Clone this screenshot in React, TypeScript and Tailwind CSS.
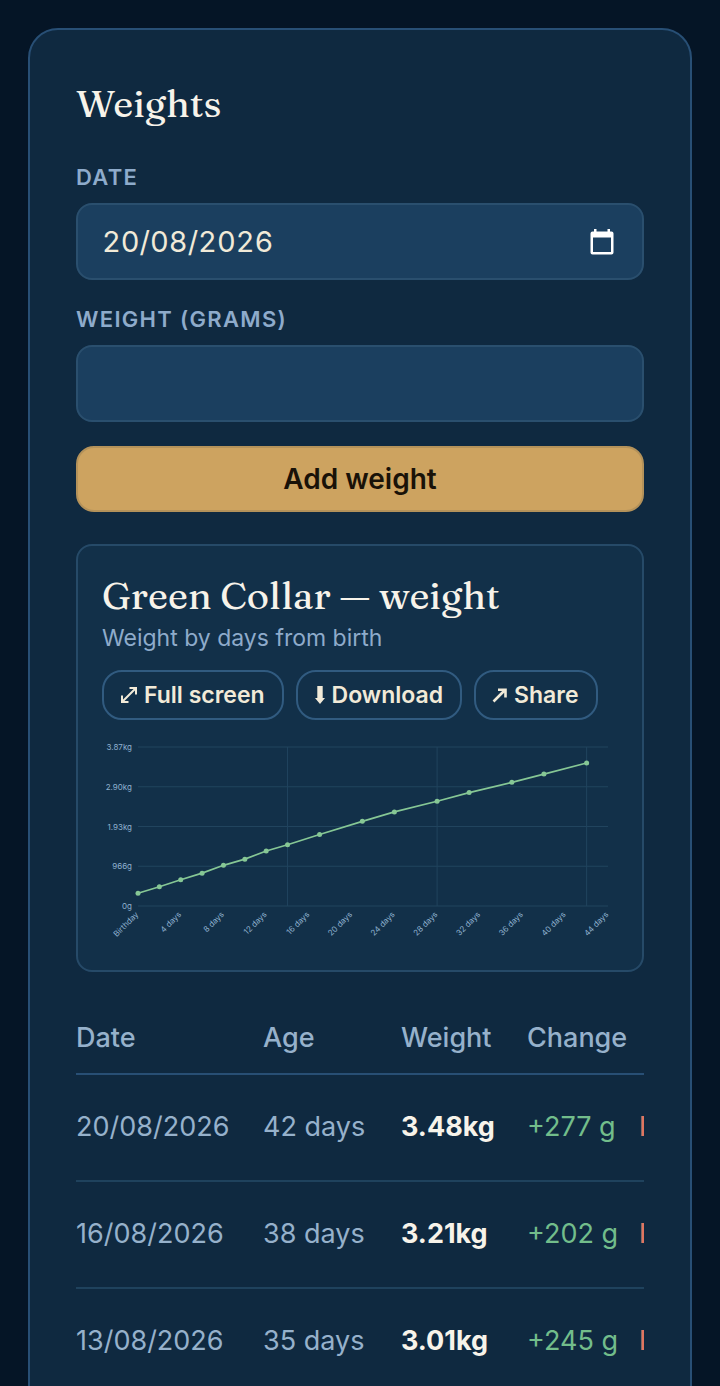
import React, { useState } from 'react';

const weighIns = [
    { day: 0, kg: 0.31 },
    { day: 2, kg: 0.47 },
    { day: 4, kg: 0.64 },
    { day: 6, kg: 0.8 },
    { day: 8, kg: 0.99 },
    { day: 10, kg: 1.14 },
    { day: 12, kg: 1.34 },
    { day: 14, kg: 1.49 },
    { day: 17, kg: 1.74 },
    { day: 21, kg: 2.06 },
    { day: 24, kg: 2.29 },
    { day: 28, kg: 2.55 },
    { day: 31, kg: 2.76 },
    { day: 35, kg: 3.01 },
    { day: 38, kg: 3.21 },
    { day: 42, kg: 3.48 },
];

const rows = [
    { date: '20/08/2026', age: '42 days', weight: '3.48kg', change: '+277 g' },
    { date: '16/08/2026', age: '38 days', weight: '3.21kg', change: '+202 g' },
    { date: '13/08/2026', age: '35 days', weight: '3.01kg', change: '+245 g' },
];

// Plot area inside the 516x210 chart
const LEFT = 36;
const RIGHT = 506;
const TOP = 11;
const BOTTOM = 170;
const MAX_DAY = 44;
const MAX_KG = 3.87;

const xAt = (day: number) => LEFT + (day / MAX_DAY) * (RIGHT - LEFT);
const yAt = (kg: number) => BOTTOM - (kg / MAX_KG) * (BOTTOM - TOP);

const yTicks = ['0g', '966g', '1.93kg', '2.90kg', '3.87kg'];
const xTicks = [0, 4, 8, 12, 16, 20, 24, 28, 32, 36, 40, 44];

const WeightChart: React.FC = () => (
    <svg viewBox="0 0 516 210" className="block w-full" role="img" aria-label="Weight by days from birth">
        {yTicks.map((label, i) => {
            const y = yAt((MAX_KG / 4) * i);
            return (
                <g key={label}>
                    <line x1={LEFT} x2={RIGHT} y1={y} y2={y} stroke="#21445e" />
                    <text x={LEFT - 6} y={y + 3} textAnchor="end" fontSize="8" fill="#8fb0cf">{label}</text>
                </g>
            );
        })}
        {[14, 28, 42].map(day => (
            <line key={day} x1={xAt(day)} x2={xAt(day)} y1={TOP} y2={BOTTOM} stroke="#21445e" />
        ))}
        {xTicks.map(day => (
            <text
                key={day}
                transform={`translate(${xAt(day) + 1} ${BOTTOM + 9}) rotate(-45)`}
                textAnchor="end"
                fontSize="8"
                fill="#8fb0cf"
            >
                {day === 0 ? 'Birthday' : `${day} days`}
            </text>
        ))}
        <polyline
            points={weighIns.map(w => `${xAt(w.day)},${yAt(w.kg)}`).join(' ')}
            fill="none"
            stroke="#86c795"
            strokeWidth="1.7"
        />
        {weighIns.map(w => (
            <circle key={w.day} cx={xAt(w.day)} cy={yAt(w.kg)} r="2.5" fill="#86c795" />
        ))}
    </svg>
);

const ExpandIcon = () => (
    <svg viewBox="0 0 18 18" className="h-[18px] w-[18px]" fill="none" stroke="currentColor" strokeWidth="2" aria-hidden="true">
        <path d="M2.500 15.500 15.500 2.500M9.500 2H16v6.500M2 9.500V16h6.500" />
    </svg>
);

const DownIcon = () => (
    <svg viewBox="0 0 12 20" className="h-5 w-3" fill="currentColor" aria-hidden="true">
        <path d="M3.300 1h5.400v12H11l-5 6-5-6h2.300z" />
    </svg>
);

const ShareIcon = () => (
    <svg viewBox="0 0 16 16" className="h-4 w-4" fill="none" stroke="currentColor" strokeWidth="2.6" aria-hidden="true">
        <path d="M1.500 14.500 13 3M6 2.800H13.500V10.500" />
    </svg>
);

const CalendarIcon = () => (
    <svg viewBox="0 0 24 26" className="h-[26px] w-6" aria-hidden="true">
        <path
            fillRule="evenodd"
            d="M4 0h2.500v2.500h11V0H20v2.500H21.500a2 2 0 0 1 2 2V23.500a2 2 0 0 1-2 2H2.500a2 2 0 0 1-2-2V4.500a2 2 0 0 1 2-2H4zM3 8.500V23h18V8.500z"
            fill="white"
        />
    </svg>
);

const labelClass = 'text-[22px] leading-7 font-semibold tracking-[0.06em] uppercase text-[#8eabcb]';
const fieldClass = 'h-[77px] w-full rounded-2xl border-2 border-[#2a4f6e] bg-[#1b3f5f] px-6 text-[29px] tabular-nums text-[#f1ead8] outline-none';
const pillClass = 'flex h-[50px] items-center gap-[6px] rounded-[20px] border-2 border-[#315b80] pl-4 pr-[17px] text-[23px] font-semibold text-[#f1ead8]';
const headingClass = "font-['Fraunces','Liberation_Serif',serif] text-[38px] font-medium text-[#f7f3ea]";

export default function App() {
    const [date, setDate] = useState('20/08/2026');
    const [grams, setGrams] = useState('');

    return (
        <main className="h-screen overflow-hidden bg-[#051526] p-7 font-['Inter',sans-serif]">
            <section className="rounded-[30px] border-2 border-[#284f75] bg-[#0f2940] p-[46px]">
                <h2 className={`${headingClass} leading-[55px]`}>Weights</h2>

                <form className="mt-8 flex flex-col" onSubmit={e => e.preventDefault()}>
                    <label htmlFor="date" className={labelClass}>Date</label>
                    <div className="relative mt-3">
                        <input id="date" className={fieldClass} value={date} onChange={e => setDate(e.target.value)} />
                        <button type="button" aria-label="Open calendar" className="absolute inset-y-0 right-[30px] flex items-center">
                            <CalendarIcon />
                        </button>
                    </div>

                    <label htmlFor="grams" className={`${labelClass} mt-[25px]`}>Weight (grams)</label>
                    <input
                        id="grams"
                        inputMode="numeric"
                        className={`${fieldClass} mt-3`}
                        value={grams}
                        onChange={e => setGrams(e.target.value)}
                    />

                    <button
                        type="submit"
                        className="mt-6 h-[66px] rounded-[18px] border-2 border-[#b4925a] bg-[#cda360] text-[28px] font-semibold text-[#191208]"
                    >
                        Add weight
                    </button>
                </form>

                {/* Growth chart */}
                <div className="mt-8 rounded-2xl border-2 border-[#264a68] bg-[#123049] p-6">
                    <h3 className={`${headingClass} leading-[52px]`}>Green Collar — weight</h3>
                    <p className="text-[23px] leading-8 text-[#8eabcb]">Weight by days from birth</p>
                    <div className="mt-4 flex gap-3">
                        <button type="button" className={pillClass}><ExpandIcon />Full screen</button>
                        <button type="button" className={pillClass}><DownIcon />Download</button>
                        <button type="button" className={pillClass}><ShareIcon />Share</button>
                    </div>
                    <div className="mt-4">
                        <WeightChart />
                    </div>
                </div>

                {/* The actions column runs past the card and is clipped on narrow screens */}
                <div className="mt-8 overflow-hidden">
                    <table className="w-[700px] table-fixed text-left text-[27px] text-[#96b1cb]">
                        <colgroup>
                            <col className="w-[187px]" />
                            <col className="w-[138px]" />
                            <col className="w-[126px]" />
                            <col className="w-[112px]" />
                            <col />
                        </colgroup>
                        <thead>
                            <tr className="h-[70px] border-b-2 border-[#284f75]">
                                <th className="font-medium">Date</th>
                                <th className="font-medium">Age</th>
                                <th className="font-medium">Weight</th>
                                <th className="font-medium">Change</th>
                                <th aria-label="Actions" />
                            </tr>
                        </thead>
                        <tbody>
                            {rows.map(row => (
                                <tr key={row.date} className="h-[107px] border-b-2 border-[#1f425d]">
                                    <td>{row.date}</td>
                                    <td>{row.age}</td>
                                    <td className="font-bold text-[#f7f3ea]">{row.weight}</td>
                                    <td className="text-[#72bd8b]">{row.change}</td>
                                    <td><button type="button" className="font-medium text-[#df7562]">Delete</button></td>
                                </tr>
                            ))}
                        </tbody>
                    </table>
                </div>
            </section>
        </main>
    );
}
